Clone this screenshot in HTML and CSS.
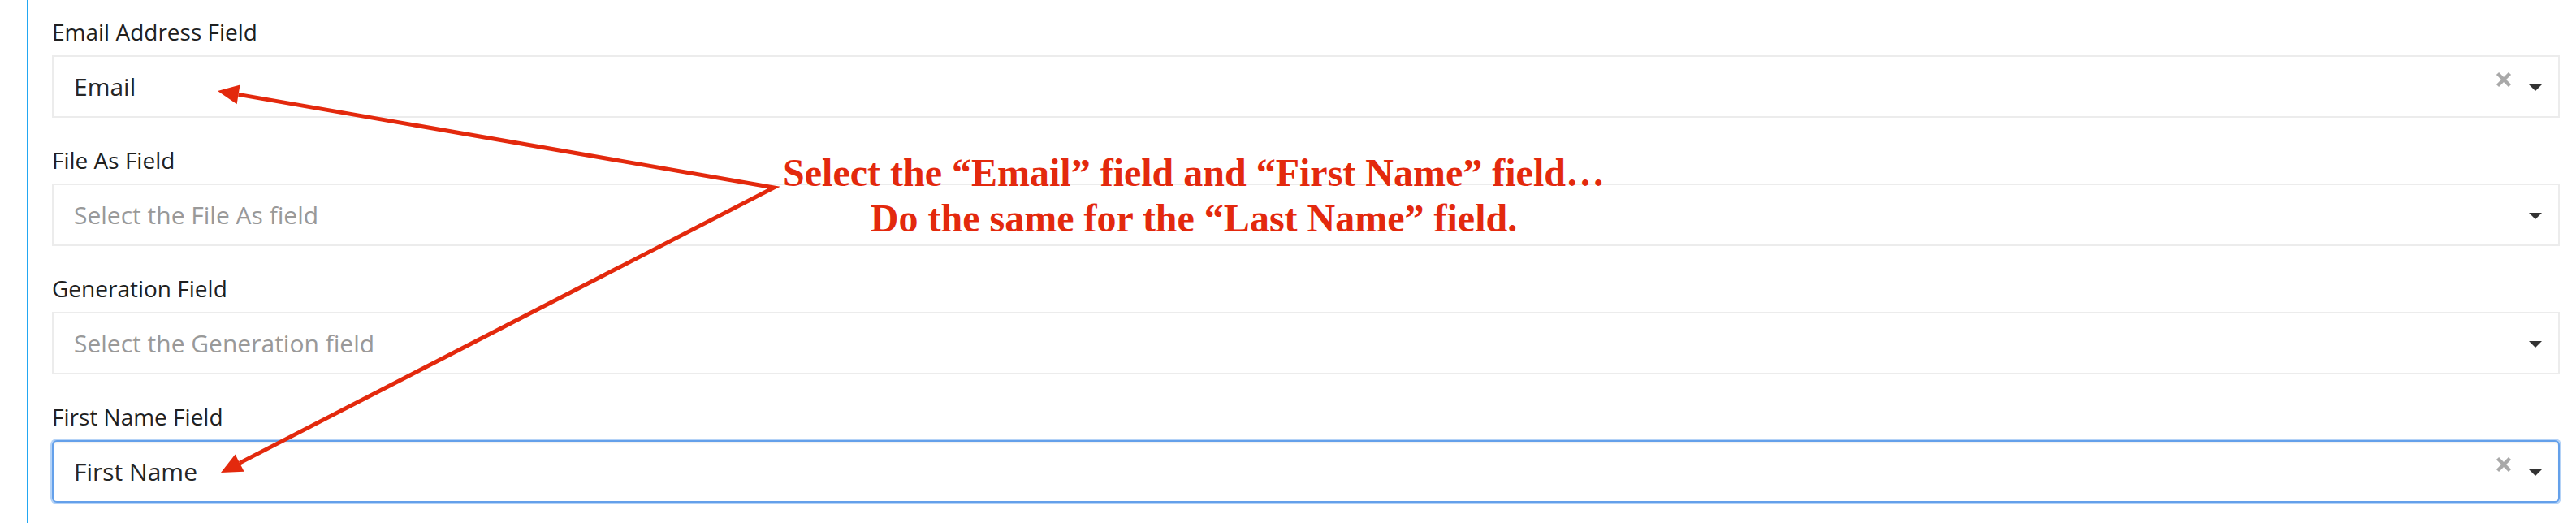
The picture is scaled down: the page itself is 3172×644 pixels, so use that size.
FILE: index.html
```html
<!DOCTYPE html>
<html lang="en">
<head>
<meta charset="utf-8">
<title>Field mapping</title>
<link rel="stylesheet" href="styles.css">
</head>
<body>
<div class="page">
  <div class="panel">
    <div class="field">
      <label class="label">Email Address Field</label>
      <div class="select">
        <span class="value">Email</span>
        <svg class="clear" width="20" height="20" viewBox="0 0 20 20"><path d="M2.5 2.5 L17.5 17.5 M17.5 2.5 L2.5 17.5"/></svg>
        <svg class="caret" width="16" height="8" viewBox="0 0 16 8"><polygon points="0,0 16,0 8,8"/></svg>
      </div>
    </div>
    <div class="field">
      <label class="label">File As Field</label>
      <div class="select">
        <span class="value placeholder">Select the File As field</span>
        <svg class="caret" width="16" height="8" viewBox="0 0 16 8"><polygon points="0,0 16,0 8,8"/></svg>
      </div>
    </div>
    <div class="field">
      <label class="label">Generation Field</label>
      <div class="select">
        <span class="value placeholder">Select the Generation field</span>
        <svg class="caret" width="16" height="8" viewBox="0 0 16 8"><polygon points="0,0 16,0 8,8"/></svg>
      </div>
    </div>
    <div class="field">
      <label class="label">First Name Field</label>
      <div class="select focused">
        <span class="value">First Name</span>
        <svg class="clear" width="20" height="20" viewBox="0 0 20 20"><path d="M2.5 2.5 L17.5 17.5 M17.5 2.5 L2.5 17.5"/></svg>
        <svg class="caret" width="16" height="8" viewBox="0 0 16 8"><polygon points="0,0 16,0 8,8"/></svg>
      </div>
    </div>
  </div>

  <svg class="arrows" width="3172" height="644" viewBox="0 0 3172 644">
    <polyline points="293.6,116.4 953,231 295.1,570.1"/>
    <polygon points="268,112 295.6,104.6 291.6,128.2"/>
    <polygon points="272,582 289.6,559.4 300.6,580.8"/>
  </svg>
  <div class="note">
    <div>Select the “Email” field and “First Name” field…</div>
    <div>Do the same for the “Last Name” field.</div>
  </div>
</div>
</body>
</html>
```
FILE: styles.css
```css
html, body {
  margin: 0;
  padding: 0;
  background: #ffffff;
}

.page {
  position: relative;
  width: 3172px;
  height: 644px;
  overflow: hidden;
}

.panel {
  box-sizing: border-box;
  margin-left: 33px;
  min-height: 644px;
  border-left: 2px solid #22a7f2;
  padding: 19px 20px 0 29px;
  display: flex;
  flex-direction: column;
  gap: 32px;
}

.field {
  display: flex;
  flex-direction: column;
}

.label {
  font-family: "Open Sans", "Liberation Sans", sans-serif;
  font-size: 28px;
  line-height: 40px;
  color: #1f1f1f;
  margin-bottom: 9px;
}

.select {
  box-sizing: border-box;
  height: 77px;
  border: 2px solid #ececec;
  background: #fff;
  display: flex;
  align-items: center;
  padding-left: 25px;
}

.select.focused {
  border-color: #64a0ea;
  border-radius: 6px;
  box-shadow: 0 0 0 2px rgba(120, 175, 240, 0.55), inset 0 2px 2px rgba(0, 0, 0, 0.06);
}

.value {
  flex: 1;
  font-family: "Open Sans", "Liberation Sans", sans-serif;
  font-size: 30px;
  line-height: 40px;
  color: #262626;
  white-space: nowrap;
}

.value.placeholder {
  color: #999999;
}

.clear {
  margin-bottom: 18px;
}

.clear path {
  stroke: #a9a9a9;
  stroke-width: 4.5;
  fill: none;
}

.caret {
  margin-left: 21px;
  margin-right: 20px;
  margin-top: 2px;
}

.caret polygon {
  fill: #333333;
}

.arrows {
  position: absolute;
  top: 0;
  left: 0;
  pointer-events: none;
}

.arrows polyline {
  fill: none;
  stroke: #e3290d;
  stroke-width: 5;
  stroke-linejoin: miter;
}

.arrows polygon {
  fill: #e3290d;
}

.note {
  position: absolute;
  top: 185px;
  left: 870px;
  width: 1200px;
  text-align: center;
  font-family: "Liberation Serif", "Times New Roman", serif;
  font-weight: bold;
  font-size: 48px;
  line-height: 56px;
  color: #e3290d;
  white-space: nowrap;
}
```
